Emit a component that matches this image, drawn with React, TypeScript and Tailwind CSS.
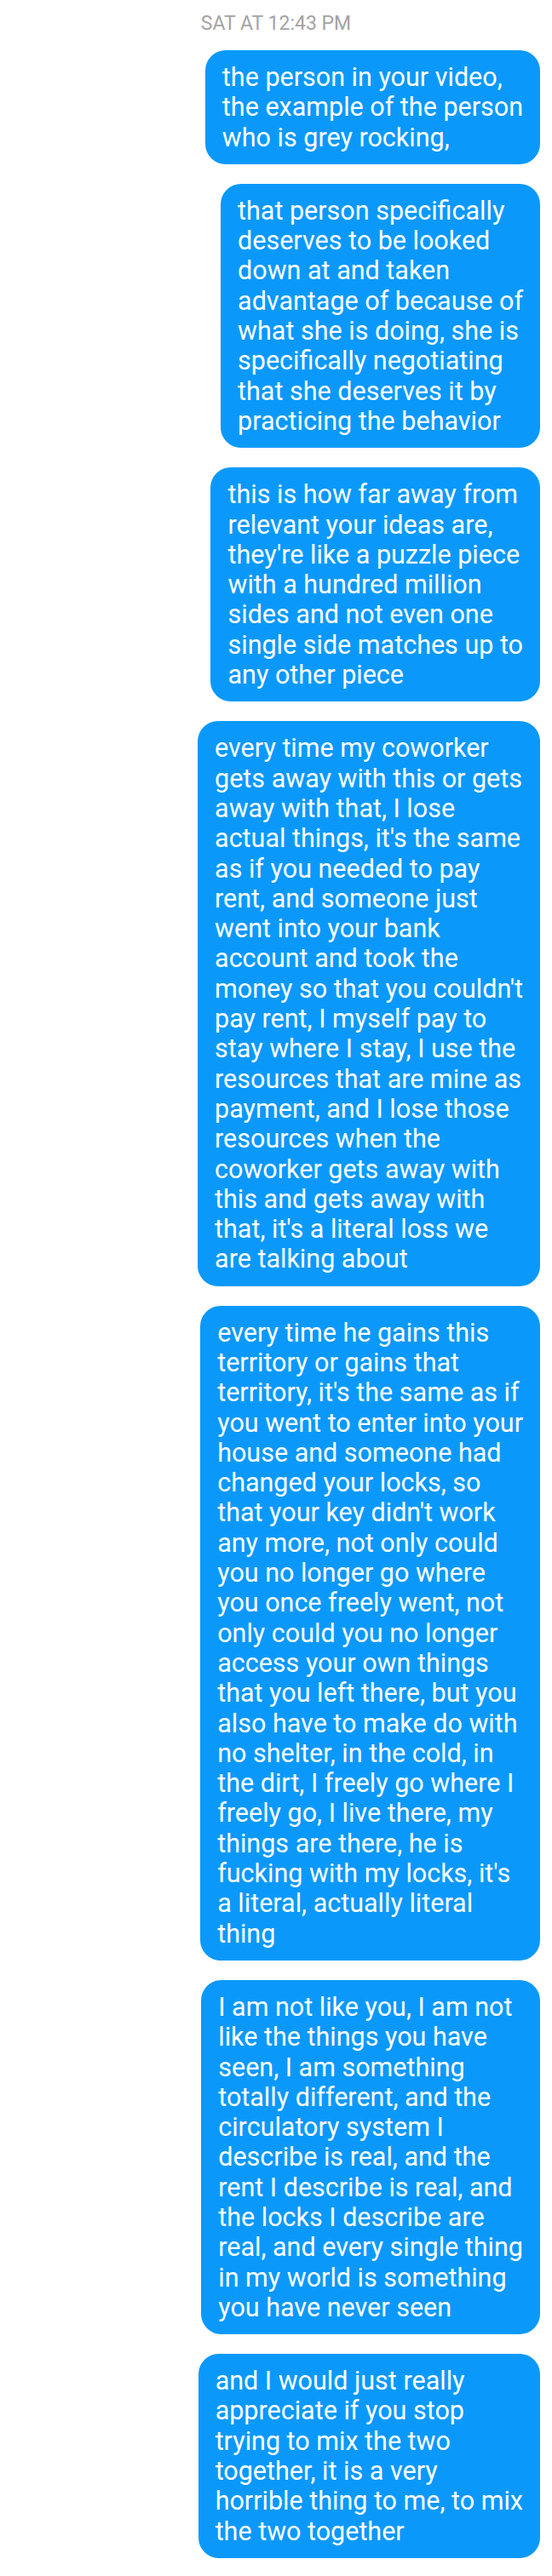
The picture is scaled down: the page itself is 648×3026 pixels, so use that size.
const messages: string[][] = [
  ["the person in your video,", "the example of the person", "who is grey rocking,"],
  [
    "that person specifically",
    "deserves to be looked",
    "down at and taken",
    "advantage of because of",
    "what she is doing, she is",
    "specifically negotiating",
    "that she deserves it by",
    "practicing the behavior",
  ],
  [
    "this is how far away from",
    "relevant your ideas are,",
    "they're like a puzzle piece",
    "with a hundred million",
    "sides and not even one",
    "single side matches up to",
    "any other piece",
  ],
  [
    "every time my coworker",
    "gets away with this or gets",
    "away with that, I lose",
    "actual things, it's the same",
    "as if you needed to pay",
    "rent, and someone just",
    "went into your bank",
    "account and took the",
    "money so that you couldn't",
    "pay rent, I myself pay to",
    "stay where I stay, I use the",
    "resources that are mine as",
    "payment, and I lose those",
    "resources when the",
    "coworker gets away with",
    "this and gets away with",
    "that, it's a literal loss we",
    "are talking about",
  ],
  [
    "every time he gains this",
    "territory or gains that",
    "territory, it's the same as if",
    "you went to enter into your",
    "house and someone had",
    "changed your locks, so",
    "that your key didn't work",
    "any more, not only could",
    "you no longer go where",
    "you once freely went, not",
    "only could you no longer",
    "access your own things",
    "that you left there, but you",
    "also have to make do with",
    "no shelter, in the cold, in",
    "the dirt, I freely go where I",
    "freely go, I live there, my",
    "things are there, he is",
    "fucking with my locks, it's",
    "a literal, actually literal",
    "thing",
  ],
  [
    "I am not like you, I am not",
    "like the things you have",
    "seen, I am something",
    "totally different, and the",
    "circulatory system I",
    "describe is real, and the",
    "rent I describe is real, and",
    "the locks I describe are",
    "real, and every single thing",
    "in my world is something",
    "you have never seen",
  ],
  [
    "and I would just really",
    "appreciate if you stop",
    "trying to mix the two",
    "together, it is a very",
    "horrible thing to me, to mix",
    "the two together",
  ],
];

export default function App() {
  return (
    <div className="min-h-[3026px] w-[648px] bg-white font-['Roboto',sans-serif]">
      <div className="pt-4 pb-[19px] text-center text-[23px] leading-[24px] text-[#a3a3a3]">
        SAT AT 12:43 PM
      </div>

      {/* Outgoing bubbles */}
      <div className="flex flex-col items-end gap-[23px] pr-[14px]">
        {messages.map((lines, i) => (
          <div
            key={i}
            className="rounded-[24px] bg-[#0a99fb] px-5 py-[14px] text-[30.5px] leading-[35.3px] text-white"
          >
            {lines.map((line, j) => (
              <div key={j} className="whitespace-nowrap">
                {line}
              </div>
            ))}
          </div>
        ))}
      </div>
    </div>
  );
}
